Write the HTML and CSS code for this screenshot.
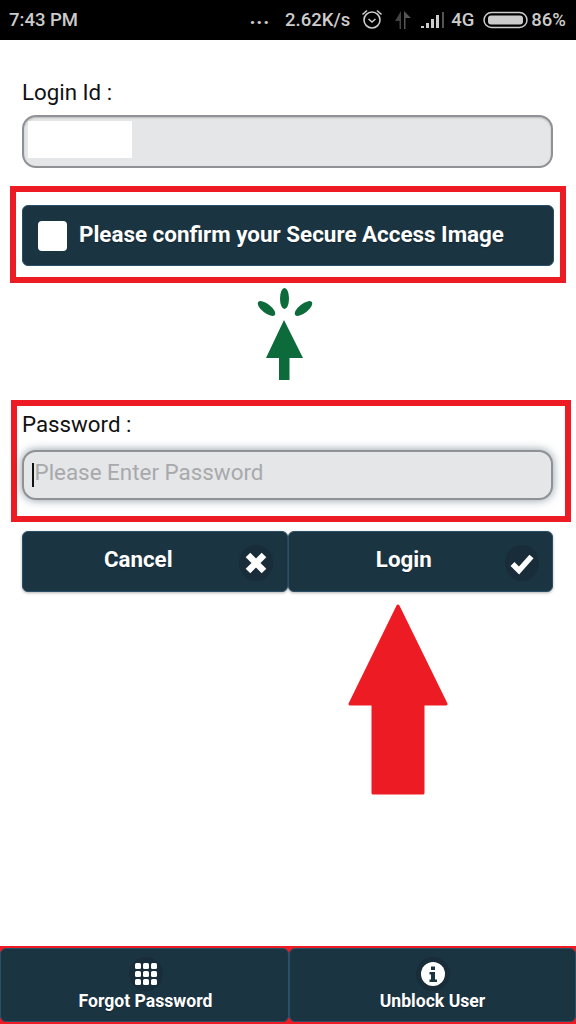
FILE: index.html
```html
<!DOCTYPE html>
<html lang="en">
<head>
<meta charset="utf-8">
<title>Login</title>
<link rel="stylesheet" href="styles.css">
</head>
<body>
<div class="screen">
  <header class="status">
    <span class="time">7:43 PM</span>
    <div class="status-right">
      <span class="dots">...</span>
      <span class="speed">2.62K/s</span>
      <svg class="ic-alarm" width="22" height="22" viewBox="0 0 22 22"><circle cx="11" cy="12" r="8" fill="none" stroke="#ccc" stroke-width="1.6"/><path d="M7.500 11l3.500 3 3.500-3" fill="none" stroke="#ccc" stroke-width="1.5"/><path d="M1.500 6.500L6 2.500M20.500 6.500L16 2.500" stroke="#ccc" stroke-width="1.6"/></svg>
      <svg class="ic-data" width="18" height="20" viewBox="0 0 18 20"><path d="M7 1v18h-1.500V11H1z" fill="#444"/><path d="M10 1v18h1.500V8H17z" fill="#555"/></svg>
      <svg class="ic-signal" width="24" height="18" viewBox="0 0 24 18"><path d="M0 15h3v2H0zM5 12h3v5H5zM10 8h3v9h-3zM15 4h3v13h-3z" fill="#ccc"/><path d="M21 1h2v16h-2z" fill="#555"/></svg>
      <span class="net">4G</span>
      <svg class="ic-batt" width="45" height="18" viewBox="0 0 45 18"><rect x="1" y="1.500" width="43" height="15" rx="7.500" fill="none" stroke="#ccc" stroke-width="1.500"/><rect x="5" y="4.500" width="35" height="9" rx="3" fill="#ccc"/></svg>
      <span class="pct">86%</span>
    </div>
  </header>

  <main class="form">
    <label class="label label-login">Login Id :</label>
    <div class="field field-login"><span class="masked"></span></div>

    <section class="mark mark-image">
      <div class="btn btn-image"><span class="swatch"></span><span>Please confirm your Secure Access Image</span></div>
    </section>

    <div class="green-wrap">
      <svg width="56" height="92" viewBox="0 0 56 92">
        <ellipse cx="27.500" cy="10.500" rx="4.500" ry="10.500" fill="#0c6a3b"/>
        <ellipse cx="9.500" cy="20.500" rx="10.500" ry="4.500" transform="rotate(38 9.500 20.500)" fill="#0c6a3b"/>
        <ellipse cx="46.500" cy="20.500" rx="10.500" ry="4.500" transform="rotate(-38 46.500 20.500)" fill="#0c6a3b"/>
        <path d="M27 32L46 70H32.500V92H22V70H9z" fill="#0c6a3b"/>
      </svg>
    </div>

    <section class="mark mark-pass">
      <label class="label">Password :</label>
      <div class="field field-pass"><i class="caret"></i><span class="placeholder">Please Enter Password</span></div>
    </section>

    <div class="actions">
      <div class="btn btn-action">Cancel
        <span class="round"><svg width="26" height="26" viewBox="0 0 26 26"><path d="M5 5l16 16M21 5L5 21" stroke="#fff" stroke-width="6.500"/></svg></span>
      </div>
      <div class="btn btn-action">Login
        <span class="round"><svg width="24" height="24" viewBox="0 0 24 24"><path d="M2.500 13l6.500 6.500L21.500 5.500" fill="none" stroke="#fff" stroke-width="5.500"/></svg></span>
      </div>
    </div>

    <div class="red-wrap">
      <svg width="100" height="191" viewBox="0 0 100 191"><path d="M50 2L98 100H75V189H25V100H2z" fill="#ed1c24" stroke="#ed1c24" stroke-width="3" stroke-linejoin="round"/></svg>
    </div>
  </main>

  <footer class="foot">
    <div class="foot-btn foot-first">
      <span class="foot-icon"><svg width="24" height="24" viewBox="0 0 24 24"><g fill="#fff"><rect x="1" y="1" width="6" height="6" rx="1.500"/><rect x="9" y="1" width="6" height="6" rx="1.500"/><rect x="17" y="1" width="6" height="6" rx="1.500"/><rect x="1" y="9" width="6" height="6" rx="1.500"/><rect x="9" y="9" width="6" height="6" rx="1.500"/><rect x="17" y="9" width="6" height="6" rx="1.500"/><rect x="1" y="17" width="6" height="6" rx="1.500"/><rect x="9" y="17" width="6" height="6" rx="1.500"/><rect x="17" y="17" width="6" height="6" rx="1.500"/></g></svg></span>
      <span>Forgot Password</span>
    </div>
    <div class="foot-btn">
      <span class="foot-icon"><svg width="24" height="24" viewBox="0 0 24 24"><circle cx="12" cy="12" r="12" fill="#fff"/><path d="M10 4.500h4v3.500h-4zM8.500 10h5.500v7.500h2V20H8.500v-2.500h1.500V12.500H8.500z" fill="#1b3442"/></svg></span>
      <span>Unblock User</span>
    </div>
  </footer>
</div>
</body>
</html>
```

FILE: styles.css
```css
* { box-sizing: border-box; }
html, body { margin: 0; padding: 0; background: #fff; }
body { font-family: Roboto, "Liberation Sans", sans-serif; }
.screen { width: 576px; height: 1024px; display: flex; flex-direction: column; overflow: hidden; }

.status { height: 40px; flex: none; background: #000; color: #ccc; display: flex; align-items: center; justify-content: space-between; padding: 0 10px 0 9px; font-size: 18.500px; font-weight: 500; }
.status-right { display: flex; align-items: center; }
.dots { font-weight: 700; font-size: 21px; margin-top: -6px; margin-right: 15px; letter-spacing: 0.8px; }
.speed { margin-right: 11px; }
.ic-alarm { margin-right: 11px; margin-top: -2px; }
.ic-data { margin-right: 9px; }
.ic-signal { margin-right: 6px; }
.net { margin-right: 9px; }
.ic-batt { margin-right: 3px; }

.form { display: flex; flex-direction: column; padding-top: 38px; }
.label { display: block; height: 28px; line-height: 28px; font-size: 22.300px; color: #111; }
.label-login { margin: 0 22px 9px; }
.field { background: #e5e6e8; border: 2px solid #8f9194; border-radius: 14px; }
.field-login { margin: 0 23px 0 22px; height: 53px; padding: 4px; box-shadow: inset 0 1px 2px rgba(0,0,0,.2); }
.masked { display: block; width: 104px; height: 37px; background: #fff; }

.mark { border: 6px solid #ed1c24; }
.mark-image { margin: 18px 10px 0; height: 97px; padding: 13px 6px 0; }
.btn { background: #1b3442; color: #fff; border: 1px solid #2b4f68; border-radius: 6px; font-weight: 700; text-shadow: 0 1px 1px rgba(0,0,0,.3); }
.btn-image { height: 61px; display: flex; align-items: center; gap: 12px; padding: 0 0 4px 15px; font-size: 22.400px; }
.swatch { width: 29px; height: 30px; margin-top: 4px; background: #fff; border-radius: 4px; flex: none; }

.green-wrap { margin-top: 5px; height: 92px; display: flex; justify-content: center; padding-right: 6px; }

.mark-pass { margin: 20px 5px 0 11px; height: 122px; padding: 4px 12px 0 0; }
.mark-pass .label { margin: 0 5px 12px; }
.field-pass { height: 50px; margin-left: 5px; display: flex; align-items: center; padding-left: 8px; box-shadow: 0 0 10px rgba(40,70,90,.55); }
.caret { width: 1.500px; height: 24px; background: #111; flex: none; }
.placeholder { font-size: 22.400px; color: #a8a9ab; margin: -6px 0 0 1px; }

.actions { margin: 9px 23px 0 22px; height: 61px; display: flex; }
.btn-action { position: relative; flex: 1; display: flex; align-items: center; justify-content: center; padding: 0 33px 6px 0; font-size: 22.300px; box-shadow: 0 1px 3px rgba(0,0,0,.3); }
.round { position: absolute; right: 14px; top: 13px; width: 34px; height: 36px; border-radius: 50%; background: #182d39; display: flex; align-items: center; justify-content: center; }
.btn-action + .btn-action .round { right: 13px; }

.red-wrap { margin: 12px 0 0 348px; height: 191px; }
.red-wrap svg, .green-wrap svg { display: block; }

.foot { margin-top: 151px; height: 78px; background: #ed1c24; padding: 2px 0 2px; display: flex; flex: none; }
.foot-btn { flex: 1; background: #1b3442; border: 1px solid #2b4f68; border-radius: 6px; color: #fff; font-weight: 700; font-size: 17.600px; display: flex; flex-direction: column; align-items: center; padding-top: 8px; text-shadow: 0 1px 1px rgba(0,0,0,.3); }
.foot-first { padding-left: 2px; }
.foot-icon { width: 34px; height: 34px; border-radius: 50%; background: #182d39; display: flex; align-items: center; justify-content: center; }
```
